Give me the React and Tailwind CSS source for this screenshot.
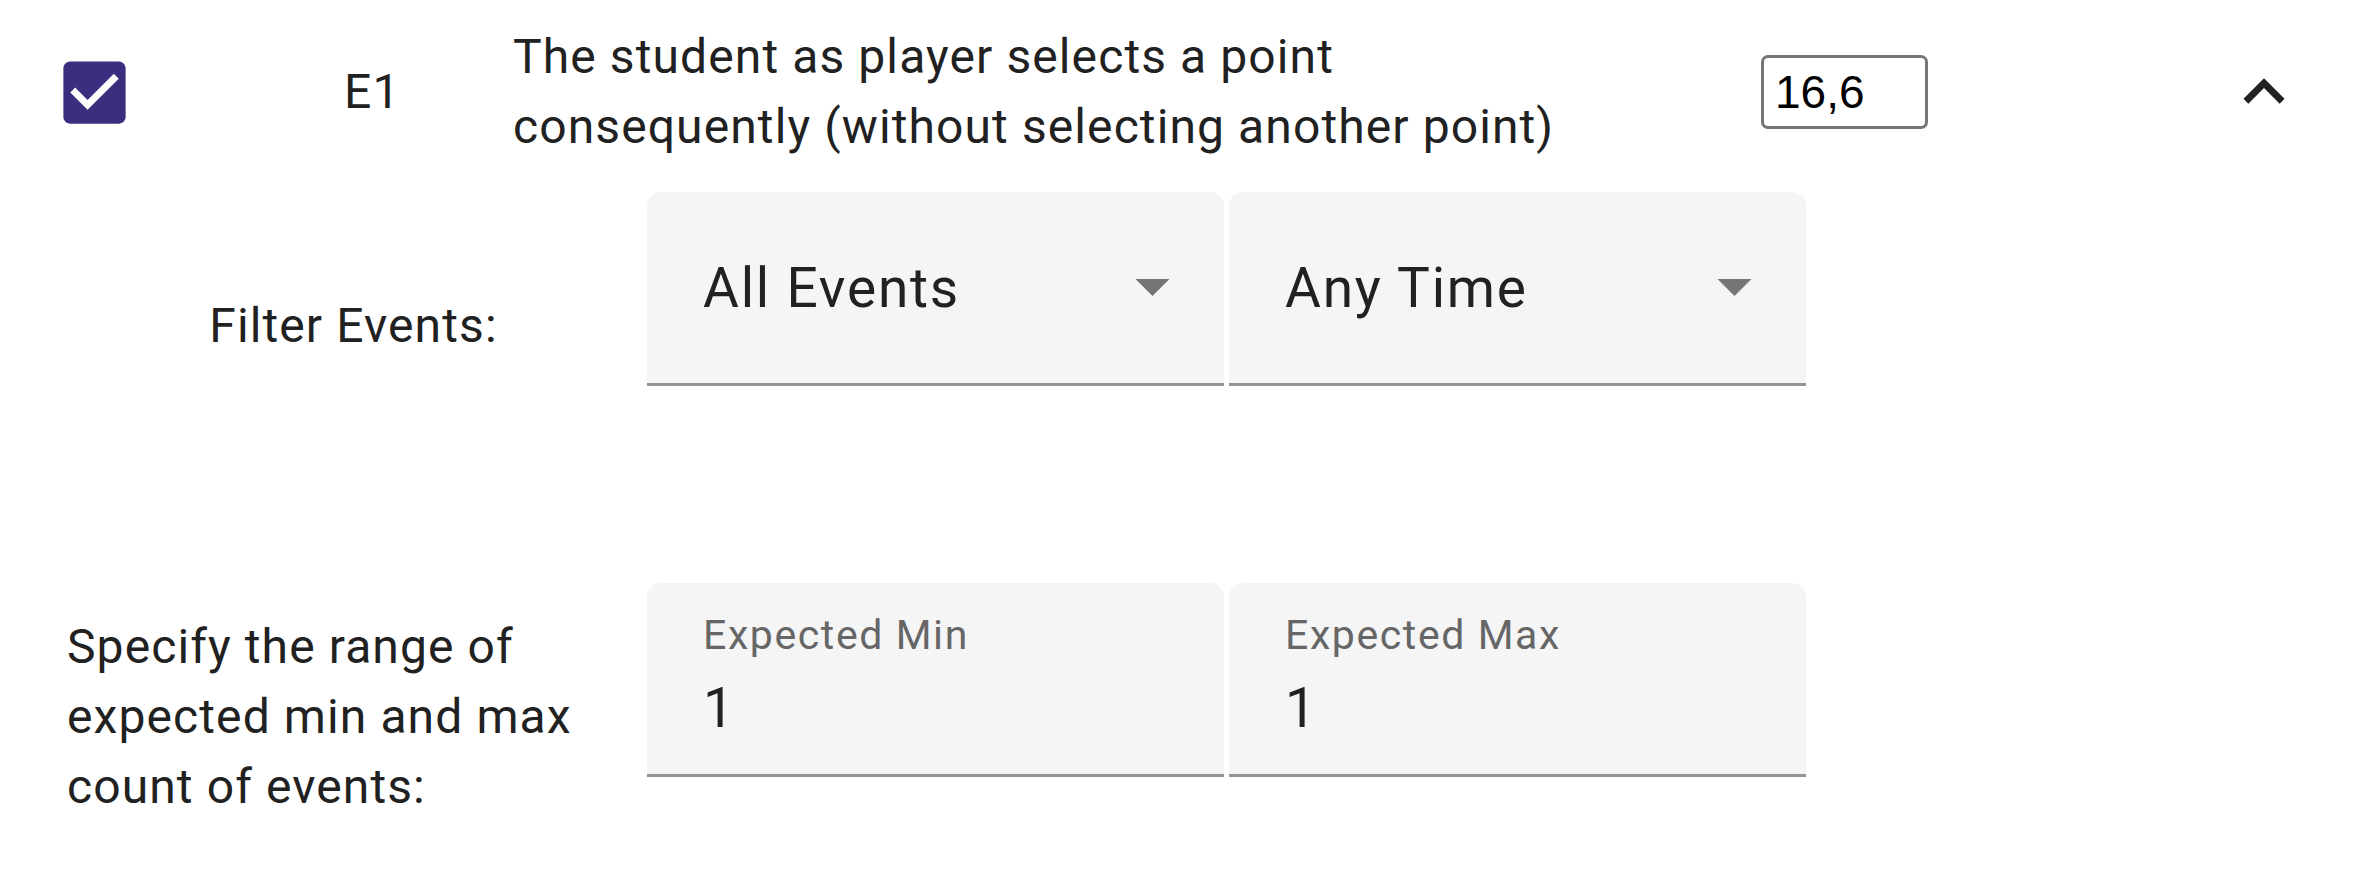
import React from 'react';

const roboto = { fontFamily: 'Roboto, "Noto Sans", sans-serif' };

const CheckIcon = () => (
    <svg viewBox="0 0 24 24" className="w-[83px] h-[83px] shrink-0">
        <path
            fill="#3b2e7e"
            d="M19 3H5c-1.11 0-2 .9-2 2v14c0 1.1.89 2 2 2h14c1.11 0 2-.9 2-2V5c0-1.1-.89-2-2-2zm-9 14l-5-5 1.41-1.41L10 14.17l7.59-7.59L19 8l-9 9z"
        />
    </svg>
);

const ExpandLess = () => (
    <svg viewBox="0 0 24 24" className="w-[82px] h-[82px] shrink-0">
        <path fill="#212121" d="M12 8l-6 6 1.41 1.41L12 10.83l4.59 4.58L18 14z" />
    </svg>
);

const SelectBox = ({ value }) => (
    <div className="box-border w-[577px] h-[194px] bg-[#f5f5f5] rounded-t-[14px] border-b-[3px] border-[#949494] flex items-center justify-between pl-[56px] pr-[54px]">
        <span className="text-[55px] leading-[64px] tracking-[1.8px] text-[#212121]">{value}</span>
        <svg viewBox="0 0 10 5" className="w-[35px] h-[17px]">
            <path fill="#757575" d="M0 0l5 5 5-5z" />
        </svg>
    </div>
);

const NumberField = ({ label, value }) => (
    <div className="box-border w-[577px] h-[194px] bg-[#f5f5f5] rounded-t-[14px] border-b-[3px] border-[#949494] flex flex-col pl-[56px] pt-[28px]">
        <span className="text-[41px] leading-[48px] tracking-[1.6px] text-[#666666]">{label}</span>
        <span className="mt-[17px] text-[55px] leading-[64px] text-[#212121]">{value}</span>
    </div>
);

export default function App() {
    return (
        <div className="w-[2362px] h-[872px] bg-white overflow-hidden text-[#212121]" style={roboto}>
            {/* Criterion header row */}
            <div className="flex items-center pt-[22px] pl-[53px]">
                <CheckIcon />
                <div className="w-[377px] pl-[208px] text-[48px] leading-[70px] tracking-[1.1px]">E1</div>
                <div className="w-[1090px] text-[48px] leading-[70px] tracking-[1.1px]">
                    The student as player selects a point consequently (without selecting another point)
                </div>
                <input
                    defaultValue="16,6"
                    className="ml-[158px] box-border w-[167px] h-[74px] border-[3px] border-[#767676] rounded-[7px] pl-[11px] text-[46px] text-black outline-none"
                    style={{ fontFamily: '"Liberation Sans", Arial, sans-serif' }}
                />
                <div className="ml-[295px]">
                    <ExpandLess />
                </div>
            </div>

            {/* Filter row */}
            <div className="flex items-center mt-[30px] pl-[67px]">
                <div className="w-[573px] text-center text-[48px] leading-[70px] tracking-[1.1px]">Filter Events:</div>
                <div className="ml-[7px] flex gap-[5px] pb-[74px]">
                    <SelectBox value="All Events" />
                    <SelectBox value="Any Time" />
                </div>
            </div>

            {/* Expected range row */}
            <div className="flex items-center mt-[123px] pl-[67px]">
                <div className="w-[573px] text-[48px] leading-[70px] tracking-[1.1px]">
                    Specify the range of expected min and max count of events:
                </div>
                <div className="ml-[7px] flex gap-[5px] pb-[74px]">
                    <NumberField label="Expected Min" value="1" />
                    <NumberField label="Expected Max" value="1" />
                </div>
            </div>
        </div>
    );
}
